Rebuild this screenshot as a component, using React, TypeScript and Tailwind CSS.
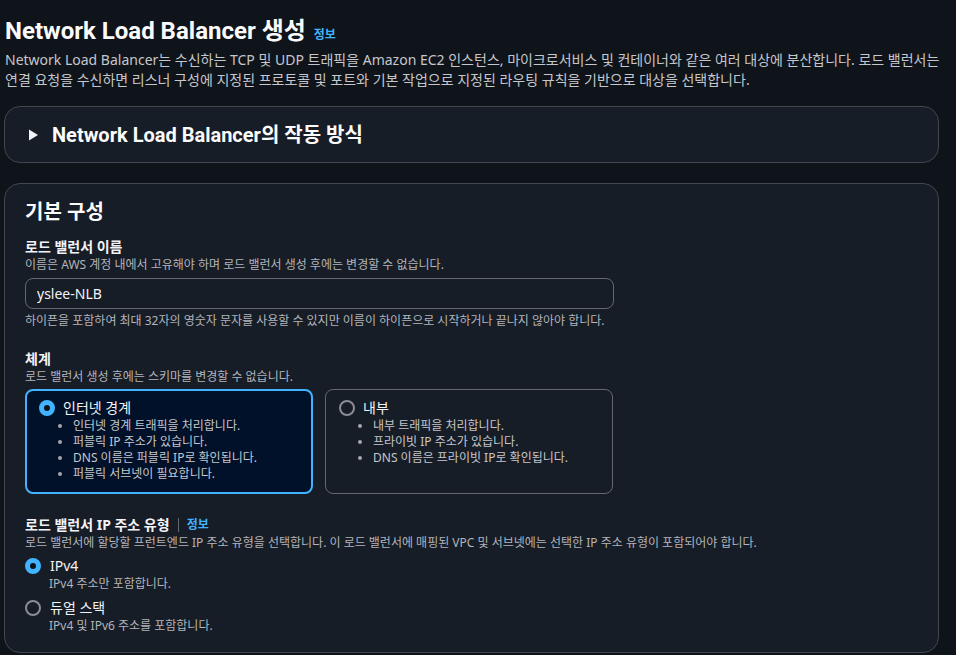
import React, { useState } from 'react';

const font = { fontFamily: '"Noto Sans", "Noto Sans CJK KR", sans-serif' };
const headFont = { fontFamily: 'Roboto, "Noto Sans CJK KR", sans-serif' };

function Radio({ checked }: { checked: boolean }) {
    return checked ? (
        <span className="inline-block w-4 h-4 rounded-full border-[5px] border-[#42b4ff] bg-[#0f141a] shrink-0" />
    ) : (
        <span className="inline-block w-4 h-4 rounded-full border-2 border-[#8c8c94] shrink-0" />
    );
}

function Tile({ title, items, selected, onClick }: { title: string; items: string[]; selected: boolean; onClick: () => void }) {
    return (
        <div
            onClick={onClick}
            className={`w-[288px] h-[105px] rounded-lg px-[12px] pt-[7px] cursor-pointer ${selected ? 'border-2 border-[#42b4ff] bg-[#001129]' : 'border border-[#656871] bg-[#161d26] pl-[13px] pt-[8px]'}`}
        >
            <div className="flex items-center gap-[8px]">
                <Radio checked={selected} />
                <span className="text-[14px] text-[#f3f3f7] leading-[20px]">{title}</span>
            </div>
            <ul className="pl-[34px] list-disc text-[12px] leading-[16px] text-[#c6c6cd] marker:text-[#a4a4ad]">
                {items.map(i => <li key={i}>{i}</li>)}
            </ul>
        </div>
    );
}

export default function App() {
    const [scheme, setScheme] = useState('internet');
    const [ipType, setIpType] = useState('ipv4');

    return (
        <div style={font} className="w-[956px] h-[655px] overflow-hidden bg-[#0f141a] text-[#c6c6cd] pl-[4px]">
            <div className="pt-[16px] pl-[1px]">
                <div className="flex items-baseline gap-[8px]">
                    <h1 style={headFont} className="text-[24px] font-bold text-[#fbfbfb] leading-[30px]">Network Load Balancer 생성</h1>
                    <a className="text-[12px] font-bold text-[#42b4ff]">정보</a>
                </div>
                <p className="w-[945px] text-[14px] leading-[20px] mt-[4px] text-[#c6c6cd]">
                    Network Load Balancer는 수신하는 TCP 및 UDP 트래픽을 Amazon EC2 인스턴스, 마이크로서비스 및 컨테이너와 같은 여러 대상에 분산합니다. 로드 밸런서는 연결 요청을 수신하면 리스너 구성에 지정된 프로토콜 및 포트와 기본 작업으로 지정된 라우팅 규칙을 기반으로 대상을 선택합니다.
                </p>
            </div>

            <div className="mt-[16px] w-[935px] h-[57px] rounded-[16px] border border-[#424650] bg-[#161d26] flex items-center pl-[23px] gap-[13px]">
                <svg width="11" height="12" viewBox="0 0 11 12"><path d="M1 0.5 L10 6 L1 11.5 Z" fill="#f3f3f7" /></svg>
                <span style={headFont} className="text-[20px] font-bold text-[#fbfbfb] leading-[24px]">Network Load Balancer의 작동 방식</span>
            </div>

            <div className="mt-[20px] w-[935px] h-[470px] rounded-[16px] border border-[#424650] bg-[#161d26] pl-[20px] pt-[14px]">
                <h2 className="text-[20px] font-bold text-[#fbfbfb] leading-[28px]">기본 구성</h2>

                <div className="mt-[11px]">
                    <div className="text-[14px] font-bold text-[#f3f3f7] leading-[20px]">로드 밸런서 이름</div>
                    <div className="text-[12px] leading-[16px] text-[#b4b4bb]">이름은 AWS 계정 내에서 고유해야 하며 로드 밸런서 생성 후에는 변경할 수 없습니다.</div>
                    <input
                        defaultValue="yslee-NLB"
                        style={font}
                        className="mt-[5px] w-[589px] h-[31px] rounded-lg border border-[#656871] bg-[#161d26] px-[11px] text-[14px] text-[#f3f3f7] outline-none"
                    />
                    <div className="mt-[4px] text-[12px] leading-[16px] text-[#b4b4bb]">하이픈을 포함하여 최대 32자의 영숫자 문자를 사용할 수 있지만 이름이 하이픈으로 시작하거나 끝나지 않아야 합니다.</div>
                </div>

                <div className="mt-[20px]">
                    <div className="text-[14px] font-bold text-[#f3f3f7] leading-[20px]">체계</div>
                    <div className="text-[12px] leading-[16px] text-[#b4b4bb]">로드 밸런서 생성 후에는 스키마를 변경할 수 없습니다.</div>
                    <div className="mt-[4px] flex gap-[12px] items-start">
                        <Tile
                            title="인터넷 경계"
                            items={['인터넷 경계 트래픽을 처리합니다.', '퍼블릭 IP 주소가 있습니다.', 'DNS 이름은 퍼블릭 IP로 확인됩니다.', '퍼블릭 서브넷이 필요합니다.']}
                            selected={scheme === 'internet'}
                            onClick={() => setScheme('internet')}
                        />
                        <Tile
                            title="내부"
                            items={['내부 트래픽을 처리합니다.', '프라이빗 IP 주소가 있습니다.', 'DNS 이름은 프라이빗 IP로 확인됩니다.']}
                            selected={scheme === 'internal'}
                            onClick={() => setScheme('internal')}
                        />
                    </div>
                </div>

                <div className="mt-[21px]">
                    <div className="flex items-center gap-[8px]">
                        <span className="text-[14px] font-bold text-[#f3f3f7] leading-[20px]">로드 밸런서 IP 주소 유형</span>
                        <span className="w-px h-[14px] bg-[#656871]" />
                        <a className="text-[12px] font-bold text-[#42b4ff]">정보</a>
                    </div>
                    <div className="text-[12px] leading-[16px] text-[#b4b4bb]">로드 밸런서에 할당할 프런트엔드 IP 주소 유형을 선택합니다. 이 로드 밸런서에 매핑된 VPC 및 서브넷에는 선택한 IP 주소 유형이 포함되어야 합니다.</div>
                    <div className="mt-[5px] flex flex-col gap-[6px]">
                        {[
                            { id: 'ipv4', label: 'IPv4', sub: 'IPv4 주소만 포함합니다.' },
                            { id: 'dual', label: '듀얼 스택', sub: 'IPv4 및 IPv6 주소를 포함합니다.' },
                        ].map(o => (
                            <div key={o.id} onClick={() => setIpType(o.id)} className="cursor-pointer">
                                <div className="flex items-center gap-[9px]">
                                    <Radio checked={ipType === o.id} />
                                    <span className="text-[14px] text-[#f3f3f7] leading-[20px]">{o.label}</span>
                                </div>
                                <div className="pl-[24px] text-[12px] leading-[16px] text-[#b4b4bb]">{o.sub}</div>
                            </div>
                        ))}
                    </div>
                </div>
            </div>
        </div>
    );
}
